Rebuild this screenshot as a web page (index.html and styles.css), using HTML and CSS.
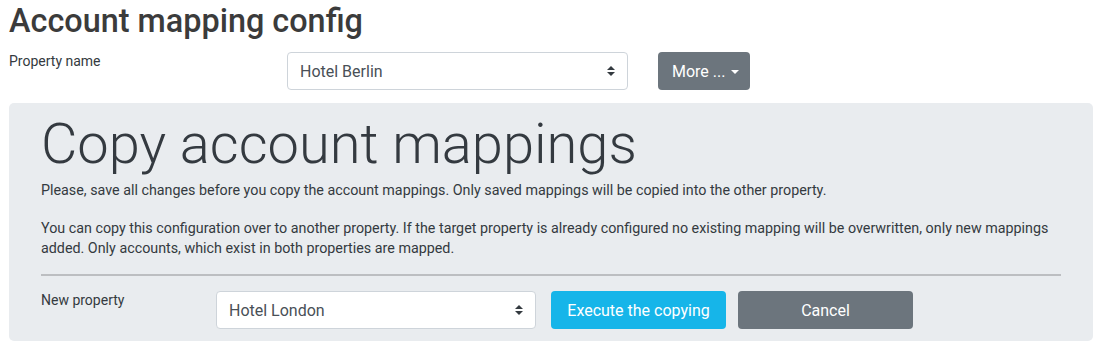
FILE: index.html
```html
<!doctype html>
<html lang="en">
<head>
  <meta charset="UTF-8">
  <title>Account mapping config</title>
  <link rel="stylesheet" href="styles.css">
</head>
<body>
  <div class="page">
    <h1 class="page-title">Account mapping config</h1>

    <div class="form-row">
      <label class="row-label">Property name</label>
      <div class="select select-top">
        <span>Hotel Berlin</span>
        <svg width="8" height="10" viewBox="0 0 4 5"><path fill="#343a40" d="M2 0L0 2h4zm0 5L0 3h4z"/></svg>
      </div>
      <button class="btn btn-gray btn-more">More ...<span class="caret"></span></button>
    </div>

    <div class="jumbotron">
      <h2 class="display">Copy account mappings</h2>
      <p>Please, save all changes before you copy the account mappings. Only saved mappings will be copied into the other property.</p>
      <p>You can copy this configuration over to another property. If the target property is already configured no existing mapping will be overwritten, only new mappings added. Only accounts, which exist in both properties are mapped.</p>
      <hr>
      <div class="form-row copy-row">
        <label class="row-label">New property</label>
        <div class="select select-bottom">
          <span>Hotel London</span>
          <svg width="8" height="10" viewBox="0 0 4 5"><path fill="#343a40" d="M2 0L0 2h4zm0 5L0 3h4z"/></svg>
        </div>
        <button class="btn btn-info btn-wide">Execute the copying</button>
        <button class="btn btn-gray btn-wide">Cancel</button>
      </div>
    </div>
  </div>
</body>
</html>
```

FILE: styles.css
```css
* {box-sizing: border-box;}
body {margin: 0; font-family: Roboto, "Liberation Sans", sans-serif; color: #343a40; background: #fff;}
.page {padding: 0 6px 0 9px;}

.page-title {font-size: 32.4px; font-weight: 500; margin: 0; line-height: 1.3; color: #3b3b3b;}

.form-row {display: flex; align-items: flex-start; margin-top: 10px;}
.row-label {width: 278px; font-size: 14px; line-height: 20px; margin-top: -1px;}

.select {display: flex; align-items: center; justify-content: space-between;
  height: 38px; padding: 0 12px; background: #fff; border: 1px solid #ced4da;
  border-radius: 4px; font-size: 16px; color: #495057;}
.select-top {width: 341px;}
.select-bottom {width: 320px;}

.btn {height: 38px; border: 0; border-radius: 4px; color: #fff; white-space: nowrap;
  font-family: inherit; font-size: 16px; padding: 0 12px;}
.btn-gray {background: #6c757d;}
.btn-info {background: #16b5e9;}
.btn-more {margin-left: 30px; width: 92px; text-align: left; padding-left: 14px;}
.btn-wide {width: 175px;}
.caret {display: inline-block; vertical-align: 3px; margin-left: 6px;
  border-top: 4px solid #fff; border-left: 4px solid transparent; border-right: 4px solid transparent;}

.jumbotron {margin-top: 13px; background: #e9ecef; border-radius: 5px; padding: 8px 32px 12px;}
.display {font-size: 56px; font-weight: 300; line-height: 1.2; margin: 0 0 2px;}
.jumbotron p {font-size: 14.3px; line-height: 20px; margin: 0 0 18px;}
.jumbotron hr {border: 0; border-top: 2px solid #bcbec1; margin: -2px 0 15px;}

.copy-row {margin-top: 0;}
.copy-row .row-label {width: 175px;}
.copy-row .btn-info {margin-left: 15px;}
.copy-row .btn-gray {margin-left: 12px;}
```
